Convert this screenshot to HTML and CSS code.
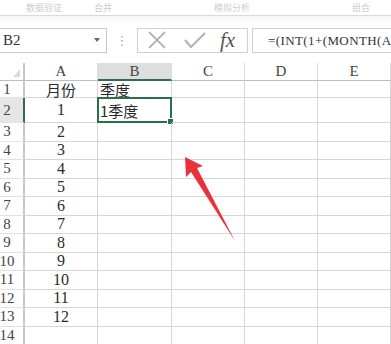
FILE: index.html
```html
<!DOCTYPE html>
<html lang="zh-CN">
<head>
    <meta charset="UTF-8">
    <meta name="viewport" content="width=device-width, initial-scale=1.0">
    <title>季度公式</title>
    <link rel="stylesheet" href="styles.css">
</head>
<body>
    <div class="page">
        <!-- bas du ruban -->
        <div class="ribbon">
            <span class="ribbon-item r1">数据验证</span>
            <span class="ribbon-item r2">合并</span>
            <span class="ribbon-item r3">模拟分析</span>
            <span class="ribbon-item r4">组合</span>
        </div>

        <div class="formula-bar">
            <div class="name-box">
                <span>B2</span>
                <span class="drop"></span>
            </div>
            <div class="grip">⋮</div>
            <div class="fx-box">
                <svg class="icon" width="20" height="18" viewBox="0 0 20 18">
                    <path d="M2 1 L18 17 M18 1 L2 17" stroke="#b4b4b4" stroke-width="1.8" fill="none"/>
                </svg>
                <svg class="icon" width="22" height="16" viewBox="0 0 22 16">
                    <path d="M1 8 L7 15 L21 1" stroke="#b4b4b4" stroke-width="2.2" fill="none"/>
                </svg>
                <span class="fx">fx</span>
            </div>
            <div class="formula">=(INT(1+(MONTH(A2)-1)/3))&amp;"季度"</div>
        </div>

        <div class="sheet">
            <div class="corner"><span class="tri"></span></div>
            <div class="col-head">A</div>
            <div class="col-head active">B</div>
            <div class="col-head">C</div>
            <div class="col-head">D</div>
            <div class="col-head">E</div>

            <div class="row-head">1</div>
            <div class="cell center">月份</div>
            <div class="cell">季度</div>
            <div class="cell"></div><div class="cell"></div><div class="cell"></div>

            <div class="row-head active">2</div>
            <div class="cell center num">1</div>
            <div class="cell selected">1季度<span class="handle"></span></div>
            <div class="cell"></div><div class="cell"></div><div class="cell"></div>

            <div class="row-head">3</div><div class="cell center num">2</div><div class="cell"></div><div class="cell"></div><div class="cell"></div><div class="cell"></div>
            <div class="row-head">4</div><div class="cell center num">3</div><div class="cell"></div><div class="cell"></div><div class="cell"></div><div class="cell"></div>
            <div class="row-head">5</div><div class="cell center num">4</div><div class="cell"></div><div class="cell"></div><div class="cell"></div><div class="cell"></div>
            <div class="row-head">6</div><div class="cell center num">5</div><div class="cell"></div><div class="cell"></div><div class="cell"></div><div class="cell"></div>
            <div class="row-head">7</div><div class="cell center num">6</div><div class="cell"></div><div class="cell"></div><div class="cell"></div><div class="cell"></div>
            <div class="row-head">8</div><div class="cell center num">7</div><div class="cell"></div><div class="cell"></div><div class="cell"></div><div class="cell"></div>
            <div class="row-head">9</div><div class="cell center num">8</div><div class="cell"></div><div class="cell"></div><div class="cell"></div><div class="cell"></div>
            <div class="row-head">10</div><div class="cell center num">9</div><div class="cell"></div><div class="cell"></div><div class="cell"></div><div class="cell"></div>
            <div class="row-head">11</div><div class="cell center num">10</div><div class="cell"></div><div class="cell"></div><div class="cell"></div><div class="cell"></div>
            <div class="row-head">12</div><div class="cell center num">11</div><div class="cell"></div><div class="cell"></div><div class="cell"></div><div class="cell"></div>
            <div class="row-head">13</div><div class="cell center num">12</div><div class="cell"></div><div class="cell"></div><div class="cell"></div><div class="cell"></div>
            <div class="row-head">14</div><div class="cell"></div><div class="cell"></div><div class="cell"></div><div class="cell"></div><div class="cell"></div>
        </div>

        <!-- flèche rouge d'annotation -->
        <svg class="arrow" width="391" height="344" viewBox="0 0 391 344">
            <polygon points="185,157 186,177 191,172 235,241 197,168 203,166" fill="#e8313b"/>
        </svg>
    </div>
</body>
</html>
```

FILE: styles.css
```css
body {
    margin: 0;
    padding: 0;
    background: white;
    color: #2b2b2b;
    font-family: "Liberation Serif", "Noto Sans CJK SC", serif;
}

.page {
    position: relative;
    width: 391px;
    height: 344px;
    overflow: hidden;
    background: white;
}

.ribbon {
    height: 15px;
    border-bottom: 1px solid #d9d9d9;
    position: relative;
    font-family: "Noto Sans CJK SC", sans-serif;
    font-size: 9px;
    color: #cdcdcd;
}

.ribbon-item {
    position: absolute;
    top: 2px;
    line-height: 11px;
}

.r1 { left: 26px; }
.r2 { left: 94px; }
.r3 { left: 214px; }
.r4 { left: 352px; }

.formula-bar {
    display: flex;
    align-items: center;
    height: 46px;
    padding-top: 1px;
    background: linear-gradient(#f6f6f6, white 9px);
}

.name-box {
    display: flex;
    align-items: center;
    justify-content: space-between;
    width: 97px;
    height: 23px;
    margin-left: -1px;
    padding-left: 3px;
    padding-right: 6px;
    border: 1px solid #c8c8c8;
    font-size: 15px;
    color: #333;
    box-sizing: content-box;
}

.drop {
    width: 0;
    height: 0;
    border-left: 3px solid transparent;
    border-right: 3px solid transparent;
    border-top: 4px solid #666;
}

.grip {
    width: 30px;
    text-align: center;
    color: #aaa;
    font-size: 13px;
    font-family: "DejaVu Sans", sans-serif;
}

.fx-box {
    display: flex;
    align-items: center;
    width: 111px;
    height: 25px;
    border: 1px solid #d0d0d0;
    box-sizing: border-box;
    padding-left: 9px;
    gap: 17px;
}

.fx-box .icon {
    display: block;
}

.fx {
    font-family: "Liberation Serif", serif;
    font-style: italic;
    font-size: 21px;
    color: #555;
    margin-left: -3px;
    line-height: 20px;
}

.formula {
    flex: 1;
    height: 25px;
    margin-left: 4px;
    border: 1px solid #d0d0d0;
    border-right: none;
    box-sizing: border-box;
    padding-left: 15px;
    line-height: 23px;
    font-size: 13px;
    letter-spacing: 0.4px;
    white-space: nowrap;
    overflow: hidden;
    color: #333;
}

.sheet {
    display: grid;
    grid-template-columns: 25px 73px 74px 73px 73px 1fr;
    grid-template-rows: 18px 17px 25px repeat(12, 18.5px);
}

.corner {
    position: relative;
    border-right: 2px solid #c8c8c8;
    border-bottom: 1px solid #bdbdbd;
}

.tri {
    position: absolute;
    right: 3px;
    bottom: 3px;
    width: 0;
    height: 0;
    border-left: 7px solid transparent;
    border-bottom: 8px solid #dadada;
}

.col-head {
    display: flex;
    align-items: center;
    justify-content: center;
    border-right: 1px solid #dcdcdc;
    border-bottom: 1px solid #bdbdbd;
    font-size: 15px;
    color: #444;
}

.col-head.active {
    background: #dedede;
    border-bottom: 2px solid #2f6e4c;
}

.row-head {
    display: flex;
    align-items: center;
    justify-content: center;
    padding-right: 9px;
    border-right: 2px solid #c8c8c8;
    border-bottom: 1px solid #e2e2e2;
    font-size: 15px;
    color: #444;
}

.row-head.active {
    background: #e6e6e6;
    border-right-color: #2f6e4c;
}

.cell {
    display: flex;
    align-items: center;
    padding-left: 2px;
    border-right: 1px solid #d6d6d6;
    border-bottom: 1px solid #d6d6d6;
    font-family: "Noto Sans CJK SC", sans-serif;
    font-size: 15px;
    line-height: 1;
    color: #2b2b2b;
    position: relative;
}

.cell.center {
    justify-content: center;
    padding-left: 0;
}

.cell.num {
    font-family: "Liberation Serif", serif;
    font-size: 16px;
}

.cell.selected {
    border: 2px solid #2f6e4c;
    margin: -1px 0 0 -1px;
    padding-left: 1px;
}

.handle {
    position: absolute;
    right: -4px;
    bottom: -4px;
    width: 5px;
    height: 5px;
    background: #2f6e4c;
    border: 1px solid white;
}

.arrow {
    position: absolute;
    top: 0;
    left: 0;
    pointer-events: none;
}
```
